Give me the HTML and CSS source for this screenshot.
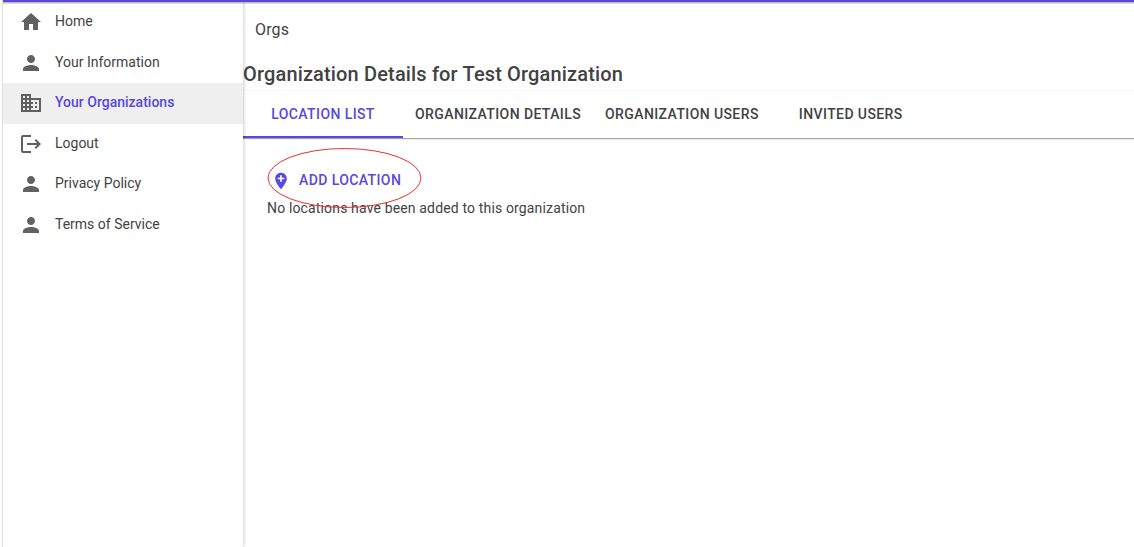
FILE: index.html
```html
<!DOCTYPE html>
<html lang="en">
<head>
<meta charset="utf-8">
<meta name="viewport" content="width=device-width, initial-scale=1">
<title>Organization Details</title>
<link rel="stylesheet" href="styles.css">
</head>
<body>
<svg class="sprite" aria-hidden="true">
  <symbol id="person" viewBox="0 0 24 24"><path d="M12 12c2.21 0 4-1.79 4-4s-1.79-4-4-4-4 1.790-4 4 1.790 4 4 4zm0 2c-2.670 0-8 1.340-8 4v2h16v-2c0-2.660-5.330-4-8-4z"/></symbol>
</svg>
<div class="app">
  <nav class="sidebar" aria-label="Main">
    <ul class="menu">
      <li><a class="menu-link" href="#home"><svg class="icon" viewBox="0 0 24 24" aria-hidden="true"><path d="M10 20v-6h4v6h5v-8h3L12 3 2 12h3v8z"/></svg><span class="label">Home</span></a></li>
      <li><a class="menu-link" href="#info"><svg class="icon" aria-hidden="true"><use href="#person"/></svg><span class="label">Your Information</span></a></li>
      <li><a class="menu-link active" href="#orgs" aria-current="page"><svg class="icon" viewBox="0 0 24 24" aria-hidden="true"><path d="M12 7V3H2v18h20V7H12zM6 19H4v-2h2v2zm0-4H4v-2h2v2zm0-4H4V9h2v2zm0-4H4V5h2v2zm4 12H8v-2h2v2zm0-4H8v-2h2v2zm0-4H8V9h2v2zm0-4H8V5h2v2zm10 12h-8v-2h2v-2h-2v-2h2v-2h-2V9h8v10zm-2-8h-2v2h2v-2zm0 4h-2v2h2v-2z"/></svg><span class="label">Your Organizations</span></a></li>
      <li><a class="menu-link" href="#logout"><svg class="icon" viewBox="0 0 24 24" aria-hidden="true"><path d="M12 3H4a2 2 0 0 0-2 2v14a2 2 0 0 0 2 2h8v-2H4V5h8zM17 7l-1.410 1.410L18.170 11H8v2h10.170l-2.580 2.580L17 17l5-5z"/></svg><span class="label">Logout</span></a></li>
      <li><a class="menu-link" href="#privacy"><svg class="icon" aria-hidden="true"><use href="#person"/></svg><span class="label">Privacy Policy</span></a></li>
      <li><a class="menu-link" href="#terms"><svg class="icon" aria-hidden="true"><use href="#person"/></svg><span class="label">Terms of Service</span></a></li>
    </ul>
  </nav>
  <main class="content">
    <p class="crumb">Orgs</p>
    <h1 class="title">Organization Details for Test Organization</h1>
    <div class="tabs" role="tablist">
      <button class="tab selected" type="button" role="tab" aria-selected="true">LOCATION LIST</button>
      <button class="tab" type="button" role="tab" aria-selected="false">ORGANIZATION DETAILS</button>
      <button class="tab" type="button" role="tab" aria-selected="false">ORGANIZATION USERS</button>
      <button class="tab" type="button" role="tab" aria-selected="false">INVITED USERS</button>
    </div>
    <section class="panel" role="tabpanel">
      <button class="add" type="button">
        <svg class="pin" viewBox="0 0 24 24" aria-hidden="true"><path d="M12 2C8.140 2 5 5.140 5 9c0 5.250 7 13 7 13s7-7.750 7-13c0-3.860-3.140-7-7-7zm4 8h-3v3h-2v-3H8V8h3V5h2v3h3v2z"/></svg>
        <span class="label">ADD LOCATION</span>
        <svg class="ring" viewBox="0 0 155 60" aria-hidden="true"><ellipse cx="77.500" cy="30" rx="76.500" ry="29.500"/></svg>
      </button>
      <p class="empty">No locations have been added to this organization</p>
    </section>
  </main>
</div>
</body>
</html>
```
FILE: styles.css
```css
* { box-sizing: border-box; }

body {
  margin: 0;
  padding-left: 2px;
  background: #fff;
  color: #424242;
  font: 14px/20px Roboto, "Liberation Sans", sans-serif;
}

p, h1, ul { margin: 0; padding: 0; }

.sprite { position: absolute; width: 0; height: 0; }

.app {
  display: flex;
  min-height: 100vh;
  border-left: 1px solid #e0e0e0;
  background: linear-gradient(#5848dc 2px, #aaa 2px, #ececec 4px, #fff 4px);
}

.sidebar {
  flex: 0 0 240px;
  padding-top: 2px;
  box-shadow: 1px 0 3px rgba(0, 0, 0, 0.2);
  clip-path: inset(3px -6px 0 0);
}

.menu {
  display: grid;
  grid-template-rows: repeat(6, 1fr);
  height: 243px;
  list-style: none;
}

.menu-link {
  display: flex;
  align-items: center;
  gap: 12px;
  height: 100%;
  padding: 0 16px;
  color: #424242;
  text-decoration: none;
}

.menu-link.active {
  background: #efefef;
  color: #5848dc;
  font-weight: 500;
}

.label { padding-bottom: 2px; }

.icon { width: 24px; height: 24px; fill: #616161; }

.content { flex: 1; min-width: 0; }

.crumb {
  padding: 18px 12px 0;
  font-size: 16px;
  line-height: 24px;
  letter-spacing: 0.00938em;
}

.title {
  padding-top: 16px;
  font-size: 20px;
  line-height: 32px;
  font-weight: 500;
  letter-spacing: 0.0075em;
}

.tabs {
  display: flex;
  border-top: 1px solid #f8f8f8;
  border-bottom: 1px solid #a6a6a6;
  box-shadow: 0 1px 1px #eee;
}

button {
  border: 0;
  background: none;
  color: #424242;
  font: inherit;
  font-weight: 500;
}

.tab {
  min-width: 160px;
  height: 47px;
  padding: 0 12px;
  border-bottom: 2px solid transparent;
  letter-spacing: 0.02857em;
}

.tab.selected { border-bottom-color: #5848dc; color: #5848dc; }

.panel { padding: 24px; }

.add {
  position: relative;
  display: flex;
  align-items: center;
  gap: 8px;
  height: 35px;
  padding: 0 4px;
  color: #5848dc;
  letter-spacing: 0.02857em;
}

.pin { width: 20px; height: 20px; fill: #5848dc; }

.ring {
  position: absolute;
  left: 0;
  top: -15px;
  width: 155px;
  height: 60px;
  fill: none;
  stroke: #e53238;
  pointer-events: none;
}

.empty { letter-spacing: 0.01071em; }
```
